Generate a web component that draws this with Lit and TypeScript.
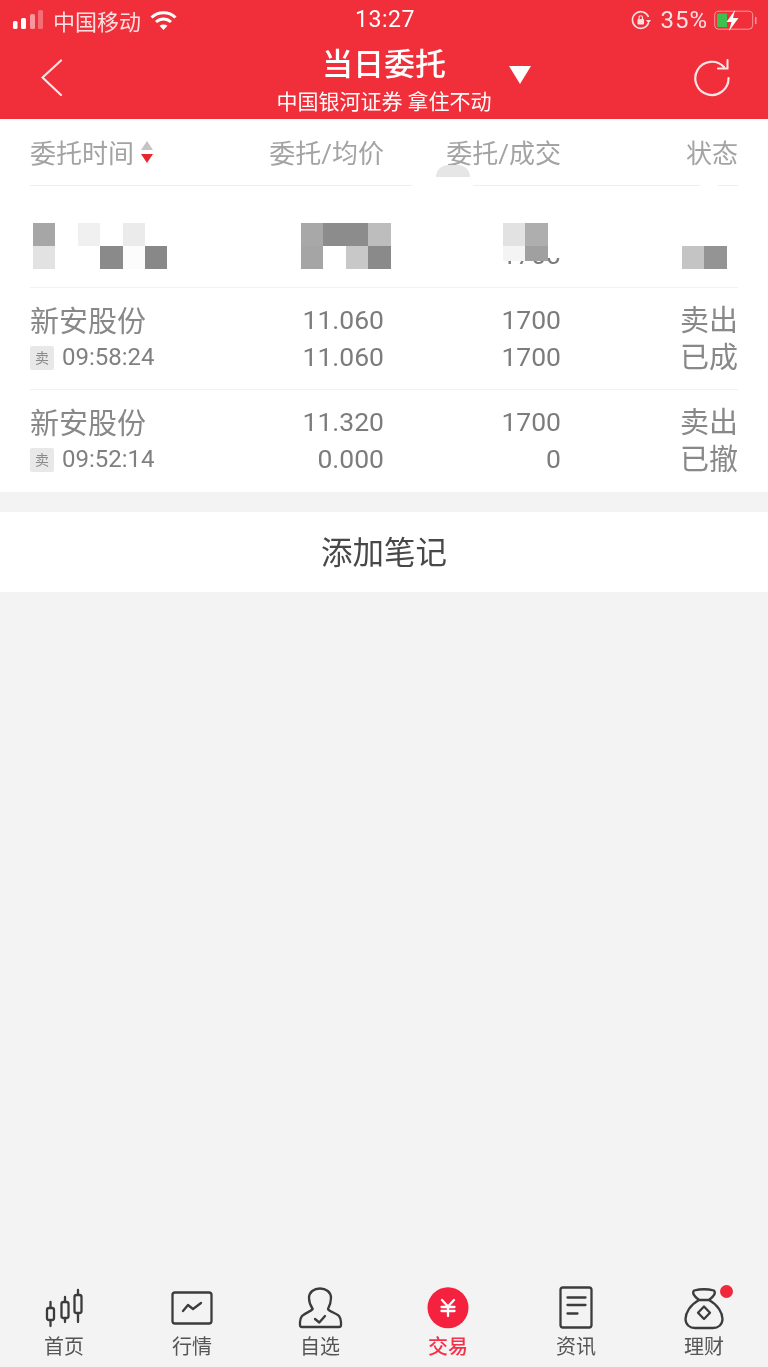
import { LitElement, html, css, svg } from 'lit';
import { customElement } from 'lit/decorators.js';

type Order = { name: string; time: string; price: string; avg: string; qty: string; done: string; side: string; state: string };

const ORDERS: Order[] = [
  { name: '新安股份', time: '09:58:24', price: '11.060', avg: '11.060', qty: '1700', done: '1700', side: '卖出', state: '已成' },
  { name: '新安股份', time: '09:52:14', price: '11.320', avg: '0.000', qty: '1700', done: '0', side: '卖出', state: '已撤' },
];

// mosaic cells: [column, row, colour]
type Cell = [number, number, string];

const mosaic = (cols: number, rows: number, cells: Cell[]) => html`
  <svg class="mosaic" width=${cols * 22.4} height=${rows * 23} viewBox="0 0 ${cols} ${rows}" preserveAspectRatio="none" shape-rendering="crispEdges">
    ${cells.map(([x, y, c]) => svg`<rect x=${x} y=${y} width="1" height="1" fill=${c}></rect>`)}
  </svg>
`;

const TABS = [
  {
    label: '首页',
    icon: svg`
      <path d="M10.5 18V42M25 13V38M38 6V38" />
      <rect x="7" y="24" width="7" height="12" rx="2" fill="#f3f3f3" />
      <rect x="21.5" y="18" width="7" height="16" rx="2" fill="#f3f3f3" />
      <rect x="34.5" y="11" width="7" height="18" rx="2" fill="#f3f3f3" />`,
  },
  {
    label: '行情',
    icon: svg`
      <rect x="4.5" y="8.5" width="39" height="31" rx="2.5" />
      <path d="M15 27L20 21L25 25L33 19" />`,
  },
  {
    label: '自选',
    icon: svg`
      <path d="M16.7 25C14 21 13 17 13 14C13 8 18 4.5 24 4.5C30 4.5 35 8 35 14C35 17 34 21 32 25C33 27.5 40 29 43 32C44.5 34 45 36 45 38V41Q45 43 43 43H6Q4 43 4 41V38C4 36 4.5 34 6 32C9 29 15 27.5 16.7 25Z" />
      <path d="M19 35L23.3 38.5L29 32" />`,
  },
  {
    label: '交易',
    active: true,
    icon: svg`
      <circle cx="24" cy="23.7" r="20.5" fill="#f5223f" stroke="none" />
      <path d="M18 16L24 22.5L30 16M17.5 23H30.5M17.5 27H30.5M24 22.5V32" stroke="#fff" />`,
  },
  {
    label: '资讯',
    icon: svg`
      <rect x="8.5" y="3.5" width="31" height="40" rx="2.5" />
      <path d="M15.5 13.5H33.5M15.5 21H33.5M15.5 29.5H25.5" />`,
  },
  {
    label: '理财',
    icon: svg`
      <path d="M14 6.5Q24 4 34 6.5Q37 10 29 16C38 21 42.5 29 42.5 35C42.5 41 38 44 33 44H15C10 44 5.5 41 5.5 35C5.5 29 10 21 19 16Q11 10 14 6.5Z" />
      <path d="M19 16H29" />
      <path d="M24 22.5L30 28.7L24 35L18 28.7Z" />`,
  },
];

@customElement('app-root')
export class AppRoot extends LitElement {
  static styles = css`
    :host {
      display: flex;
      flex-direction: column;
      width: 768px;
      height: 1367px;
      background: #f3f3f3;
      font-family: Roboto, "Noto Sans CJK SC", sans-serif;
      filter: blur(0.6px);
      overflow: hidden;
    }

    .red {
      background: #f12f3a;
      color: #fff;
    }

    .status {
      display: flex;
      align-items: center;
      height: 40px;
      font-size: 22px;
    }

    .status-left {
      display: flex;
      align-items: center;
      flex: 1;
      padding-left: 12px;
    }

    .carrier {
      margin: 0 9px 0 8px;
      color: #fbe0e2;
    }

    .clock {
      font-size: 23px;
      letter-spacing: 0.5px;
      margin-bottom: 2px;
    }

    .status-right {
      display: flex;
      align-items: center;
      justify-content: flex-end;
      flex: 1;
      padding-right: 10px;
    }

    .pct {
      margin: 0 6px 0 9px;
      font-size: 24px;
      letter-spacing: 1px;
      color: #fbe0e2;
    }

    .nav {
      display: grid;
      grid-template-columns: 1fr auto 1fr;
      height: 79px;
    }

    .back {
      padding: 19px 0 0 41px;
    }

    .title-block {
      text-align: center;
      padding-top: 5px;
    }

    .title {
      font-size: 31px;
      line-height: 40px;
      font-weight: 500;
    }

    .sub {
      font-size: 21px;
      line-height: 30px;
      margin-top: 2px;
      white-space: nowrap;
    }

    .nav-right {
      display: flex;
      justify-content: space-between;
      padding: 26px 37px 0 17px;
    }

    .refresh {
      margin-top: -7px;
    }

    .table {
      background: #fff;
      position: relative;
    }

    .grid {
      display: grid;
      grid-template-columns: 200px 154px 177px 177px;
      margin: 0 30px;
    }

    .grid > div {
      text-align: right;
    }

    .grid > div:first-child {
      text-align: left;
    }

    .head {
      height: 49px;
      padding-top: 17px;
      font-size: 26px;
      line-height: 36px;
      color: #a3a3a3;
    }

    .sort {
      display: inline-block;
      vertical-align: -1px;
      margin-left: 7px;
    }

    .head-line {
      height: 1px;
      margin: 0 30px;
      background: linear-gradient(to right, #eee 0 382px, #fff 382px 443px, #eee 443px 670px, #fff 670px 688px, #eee 688px);
    }

    .smudge {
      position: absolute;
      left: 436px;
      top: 46px;
      width: 34px;
      height: 12px;
      background: #e6e6e6;
      border-radius: 17px 17px 0 0;
    }

    .row {
      height: 101px;
      border-bottom: 1px solid #f2f2f2;
      margin: 0 30px;
    }

    .row .grid {
      margin: 0;
      padding-top: 13px;
      font-size: 26.5px;
      line-height: 37px;
      color: #7c7c7c;
    }

    .row:last-child {
      border-bottom: 0;
      height: 102px;
    }

    .blurred {
      height: 102px;
      border-bottom: 1px solid #f2f2f2;
      margin: 0 30px;
      box-sizing: border-box;
    }

    .blurred .grid {
      margin: 0;
      padding-top: 37px;
    }

    .blurred .grid > div {
      position: relative;
      height: 46px;
    }

    .mosaic {
      display: block;
    }

    .m-name {
      margin-left: 3px;
    }

    .m-price {
      position: absolute;
      right: -7px;
      top: 0;
    }

    .hidden-qty {
      position: absolute;
      right: 0;
      top: 13px;
      font-size: 26.5px;
      line-height: 37px;
      color: #7c7c7c;
    }

    .qty-cover {
      position: absolute;
      left: 119px;
      top: 0;
      width: 58px;
      height: 35px;
      background: #fff;
    }

    .m-qty {
      position: absolute;
      left: 119px;
      top: 0;
      height: 38px;
      overflow: hidden;
    }

    .m-state {
      position: absolute;
      right: 11px;
      top: 0;
    }

    .name {
      font-size: 29px;
      color: #888;
      margin: 3px 0 -2px;
    }

    .time {
      display: flex;
      align-items: center;
      gap: 8px;
      font-size: 24px;
      color: #808080;
    }

    .tag {
      width: 24px;
      height: 24px;
      background: #e8e8e8;
      border-radius: 2px;
      font-size: 14px;
      line-height: 24px;
      text-align: center;
      color: #8a8a8a;
    }

    .side {
      font-size: 29px;
      color: #888;
      margin-top: 2px;
    }

    .note {
      margin-top: 20px;
      height: 80px;
      background: #fff;
      font-size: 31.5px;
      line-height: 84px;
      text-align: center;
      color: #484848;
    }

    .tabs {
      display: grid;
      grid-template-columns: repeat(6, 1fr);
      margin-top: auto;
      height: 83px;
    }

    .tab {
      display: flex;
      flex-direction: column;
      align-items: center;
      position: relative;
      font-size: 20px;
      line-height: 26px;
      color: #555;
    }

    .tab.active {
      color: #f5304a;
      font-weight: 500;
    }

    .tab svg {
      fill: none;
      stroke: #3c3c3c;
      stroke-width: 2.3;
      stroke-linejoin: round;
      stroke-linecap: round;
      margin-bottom: 2px;
    }

    .dot {
      position: absolute;
      left: 80px;
      top: 1px;
      width: 13px;
      height: 13px;
      border-radius: 50%;
      background: #f0283c;
    }
  `;

  renderStatus() {
    return html`
      <div class="status">
        <div class="status-left">
          <svg width="33" height="20" viewBox="0 0 33 20">
            <rect x="1" y="11" width="4.5" height="8" rx="1.5" fill="#fff" />
            <rect x="9" y="8" width="5" height="11" rx="1.5" fill="#fff" />
            <rect x="18" y="4" width="5" height="15" rx="1.5" fill="#fff" opacity=".5" />
            <rect x="26" y="0" width="5" height="19" rx="1.5" fill="#fff" opacity=".3" />
          </svg>
          <span class="carrier">中国移动</span>
          <svg width="27" height="21" viewBox="0 0 27 21" fill="none" stroke="#fff" stroke-width="3">
            <path d="M1.5 7.5C8 1 19 1 25.5 7.5" />
            <path d="M6 12C10.5 8 16.5 8 21 12" />
            <path d="M13.5 20L9.5 15.8C12 14 15 14 17.5 15.8Z" fill="#fff" stroke="none" />
          </svg>
        </div>
        <span class="clock">13:27</span>
        <div class="status-right">
          <svg width="20" height="20" viewBox="0 0 20 20" fill="none" stroke="#fbe0e2" stroke-width="1.6">
            <path d="M17.5 13A8.3 8.3 0 1 1 17.5 7" />
            <path d="M15 10H20L17.5 13.5Z" fill="#fbe0e2" stroke="none" />
            <rect x="6.5" y="9" width="6.5" height="5.5" rx="1" fill="#fbe0e2" stroke="none" />
            <path d="M8 9V7.5A1.7 1.7 0 0 1 11.5 7.5V9" stroke-width="1.2" />
          </svg>
          <span class="pct">35%</span>
          <svg width="44" height="21" viewBox="0 0 44 21">
            <rect x="0.7" y="1.2" width="38" height="18" rx="4" fill="none" stroke="#fff" stroke-opacity=".5" />
            <path d="M3 5Q3 3.5 4.5 3.5H13V17H4.5Q3 17 3 15.5Z" fill="#3cc04e" />
            <rect x="41" y="7" width="1.5" height="7" fill="#fff" opacity=".5" />
            <path d="M21 0L12.5 12H17.5L15 21L24.5 8H19Z" fill="#fff" />
          </svg>
        </div>
      </div>
    `;
  }

  renderNav() {
    return html`
      <div class="nav">
        <div class="back">
          <svg width="22" height="38" viewBox="0 0 22 38" fill="none" stroke="#fbe6e7" stroke-width="2.2" stroke-linecap="round">
            <path d="M20 1.5L1.5 18.5L20 36" />
          </svg>
        </div>
        <div class="title-block">
          <div class="title">当日委托</div>
          <div class="sub">中国银河证券 拿住不动</div>
        </div>
        <div class="nav-right">
          <svg width="22" height="18" viewBox="0 0 22 18">
            <path d="M0 0H22L11 18Z" fill="#fff" />
          </svg>
          <svg class="refresh" width="38" height="38" viewBox="0 0 38 38" fill="none" stroke="#fbe6e7" stroke-width="2.2" stroke-linecap="round">
            <path d="M31 8A16.6 16.6 0 1 0 35.5 19" />
            <path d="M25 9.5H34.5V1" stroke-width="2" />
          </svg>
        </div>
      </div>
    `;
  }

  renderBlurredRow() {
    return html`
      <div class="blurred">
        <div class="grid">
          <div>
            <div class="m-name">${mosaic(6, 2, [
              [0, 0, '#a6a6a6'],
              [0, 1, '#e2e2e2'],
              [2, 0, '#f0f0f0'],
              [4, 0, '#ebebeb'],
              [3, 1, '#8a8a8a'],
              [4, 1, '#fcfcfc'],
              [5, 1, '#888888'],
            ])}</div>
          </div>
          <div>
            <div class="m-price">${mosaic(4, 2, [
              [0, 0, '#a8a8a8'],
              [1, 0, '#8c8c8c'],
              [2, 0, '#8c8c8c'],
              [3, 0, '#bdbdbd'],
              [0, 1, '#a5a5a5'],
              [2, 1, '#c8c8c8'],
              [3, 1, '#8a8a8a'],
            ])}</div>
          </div>
          <div>
            <span class="hidden-qty">1700</span>
            <div class="qty-cover"></div>
            <div class="m-qty">${mosaic(2, 2, [
              [0, 0, '#e2e2e2'],
              [1, 0, '#aeaeae'],
              [0, 1, '#f4f4f4'],
              [1, 1, '#a0a0a0'],
            ])}</div>
          </div>
          <div>
            <div class="m-state">${mosaic(2, 2, [
              [0, 1, '#c4c4c4'],
              [1, 1, '#949494'],
            ])}</div>
          </div>
        </div>
      </div>
    `;
  }

  render() {
    return html`
      <div class="red">
        ${this.renderStatus()} ${this.renderNav()}
      </div>
      <div class="table">
        <div class="grid head">
          <div>
            委托时间<svg class="sort" width="12" height="23" viewBox="0 0 12 23">
              <path d="M6 0L12 9H0Z" fill="#c4c4c4" />
              <path d="M0 13H12L6 22Z" fill="#e8262e" />
            </svg>
          </div>
          <div>委托/均价</div>
          <div>委托/成交</div>
          <div>状态</div>
        </div>
        <div class="head-line"></div>
        <div class="smudge"></div>
        ${this.renderBlurredRow()}
        ${ORDERS.map(
          (o) => html`
            <div class="row">
              <div class="grid">
                <div>
                  <div class="name">${o.name}</div>
                  <div class="time"><span class="tag">卖</span>${o.time}</div>
                </div>
                <div>${o.price}<br />${o.avg}</div>
                <div>${o.qty}<br />${o.done}</div>
                <div class="side">${o.side}<br />${o.state}</div>
              </div>
            </div>
          `
        )}
      </div>
      <div class="note">添加笔记</div>
      <div class="tabs">
        ${TABS.map(
          (t) => html`
            <div class="tab ${t.active ? 'active' : ''}">
              <svg width="48" height="48" viewBox="0 0 48 48">${t.icon}</svg>
              ${t.label}
              ${t.label === '理财' ? html`<span class="dot"></span>` : ''}
            </div>
          `
        )}
      </div>
    `;
  }
}
